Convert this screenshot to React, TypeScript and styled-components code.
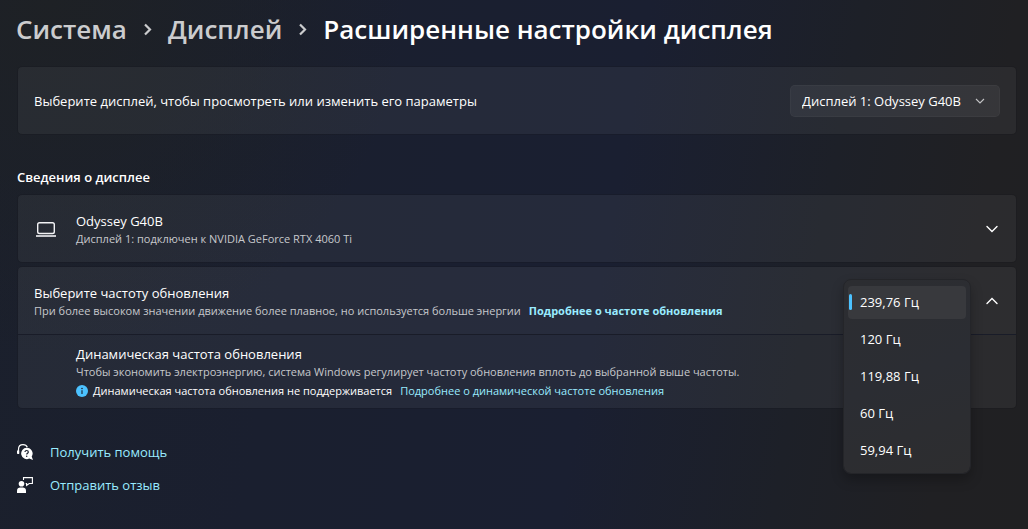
import React, { useState } from "react";
import styled, { createGlobalStyle } from "styled-components";

const GlobalStyle = createGlobalStyle`
  * { box-sizing: border-box; }
  html { min-height: 100%; background: #1b1f2d; }
  body {
    margin: 0;
    min-height: 100vh;
    color: #fff;
    font-family: "Open Sans", "Noto Sans", sans-serif;
    font-size: 13px;
    line-height: 20px;
    background:
      radial-gradient(circle at 5% 0, #1e2125 0%, rgba(30, 33, 37, 0) 32%),
      linear-gradient(100deg, #1b202c 0%, #1a1f2f 30%, #1a1f31 58%, #1d2028 77%, #202023 91%, #202022 100%);
  }
  button, select { font: inherit; color: inherit; }
`;

const Page = styled.main`
  padding: 7px 11px 16px 17px;
`;

const Breadcrumb = styled.ol`
  display: flex;
  align-items: center;
  margin: 0 0 15px -1px;
  padding: 0;
  list-style: none;
  font-size: 26px;
  font-weight: 600;
  line-height: 44px;
  white-space: nowrap;
`;

const Crumb = styled.li`
  display: flex;
  align-items: center;
`;

const CrumbLink = styled.a`
  color: #cbccce;
  text-decoration: none;
`;

const PageTitle = styled.h1`
  margin: 0;
  font: inherit;
`;

const CrumbSeparator = styled.svg`
  width: 12px;
  height: 14px;
  margin: 0 14px 0 15px;
  color: #cbccce;
`;

const Card = styled.section`
  border: 1px solid rgba(18, 20, 26, 0.25);
  border-radius: 5px;
  background: rgba(255, 255, 255, 0.05);
  background-clip: padding-box;
  & + & { margin-top: 3px; }
`;

const Row = styled.div<{ $raised?: boolean }>`
  display: flex;
  align-items: center;
  min-height: 67px;
  padding: 0 16px;
  background: ${(p) => (p.$raised ? "rgba(255, 255, 255, 0.012)" : "transparent")};
`;

const DetailRow = styled.div`
  border-top: 1px solid #191c28;
  padding: 9px 58px 8px;
`;

const RowText = styled.div`
  flex: 1;
  min-width: 0;
`;

const Label = styled.label`
  flex: 1;
`;

const RowTitle = styled.h3`
  margin: 0;
  font-size: 13px;
  font-weight: 400;
  line-height: 20px;
`;

const Caption = styled.p`
  margin: 0;
  font-size: 11px;
  line-height: 16px;
  color: #c6c8cc;
`;

const CaptionLink = styled.a<{ $strong?: boolean }>`
  margin-left: 8px;
  color: #99ebff;
  font-weight: ${(p) => (p.$strong ? 700 : 400)};
  text-decoration: none;
`;

const Notice = styled(Caption)`
  display: flex;
  align-items: center;
  margin-top: 2px;
  line-height: 18px;
  color: #fff;
`;

const InfoIcon = styled.svg`
  width: 12px;
  height: 12px;
  margin-right: 5px;
`;

const SectionTitle = styled.h2`
  margin: 32px 0 7px;
  font-size: 13px;
  font-weight: 600;
  line-height: 20px;
`;

const LeadIcon = styled.svg`
  width: 20px;
  height: 20px;
  margin: 0 20px 0 2px;
`;

const SelectBox = styled.div`
  display: grid;
  align-items: center;
  justify-items: end;
  width: 210px;
`;

const Select = styled.select`
  grid-area: 1 / 1;
  appearance: none;
  width: 100%;
  height: 32px;
  padding: 0 32px 0 11px;
  border: 1px solid rgba(255, 255, 255, 0.03);
  border-radius: 5px;
  background: rgba(255, 255, 255, 0.055);
`;

const SelectArrow = styled.svg`
  grid-area: 1 / 1;
  width: 10px;
  height: 10px;
  margin-right: 15px;
  color: #c4c4c6;
  pointer-events: none;
`;

const ExpandButton = styled.button`
  display: flex;
  align-items: center;
  justify-content: center;
  width: 32px;
  height: 32px;
  margin-right: -8px;
  padding: 0;
  border: 0;
  background: none;
`;

const MenuAnchor = styled.div`
  position: relative;
  width: 128px;
  height: 44px;
  margin-right: 5px;
`;

const Menu = styled.div`
  position: absolute;
  top: 0;
  left: 0;
  z-index: 1;
  display: flex;
  flex-direction: column;
  gap: 4px;
  width: 128px;
  padding: 6px 4px;
  border: 1px solid #242529;
  border-radius: 8px;
  background: linear-gradient(160deg, #2c2d31, #2b2d33 50%, #2d2d2f);
  background-clip: padding-box;
  box-shadow: 0 6px 12px rgba(0, 0, 0, 0.25);
`;

const Option = styled.button<{ $selected: boolean }>`
  display: flex;
  align-items: center;
  height: 33px;
  padding: 0 8px 0 1px;
  border: 0;
  border-radius: 4px;
  text-align: left;
  background: ${(p) => (p.$selected ? "#38393d" : "transparent")};
  &::before {
    content: "";
    width: 3px;
    height: 16px;
    margin-right: 8px;
    border-radius: 2px;
    background: ${(p) => (p.$selected ? "#4cc2ff" : "transparent")};
  }
`;

const HelpLinks = styled.nav`
  display: flex;
  flex-direction: column;
  align-items: flex-start;
  gap: 13px;
  margin-top: 33px;
`;

const HelpLink = styled.a`
  display: flex;
  align-items: center;
  gap: 17px;
  color: #99ebff;
  text-decoration: none;
`;

const HelpIcon = styled.svg`
  width: 16px;
  height: 16px;
  color: #fff;
`;

const rates = ["239,76 Гц", "120 Гц", "119,88 Гц", "60 Гц", "59,94 Гц"];

function Separator() {
  return (
    <CrumbSeparator viewBox="0 0 12 14" aria-hidden="true">
      <path d="M3 2.500l5 5-5 5" fill="none" stroke="currentColor" strokeWidth="2.200" />
    </CrumbSeparator>
  );
}

function Chevron({ up = false }: { up?: boolean }) {
  return (
    <svg width="12" height="12" viewBox="0 0 12 12" fill="none" stroke="#fff" strokeWidth="1.4" strokeLinecap="round" aria-hidden="true">
      <path d={up ? "M1 8.500l5-5 5 5" : "M1 3.500l5 5 5-5"} />
    </svg>
  );
}

export default function App() {
  const [rate, setRate] = useState(rates[0]);

  return (
    <>
      <GlobalStyle />
      <Page>
        <Breadcrumb>
          <Crumb><CrumbLink href="#system">Система</CrumbLink><Separator /></Crumb>
          <Crumb><CrumbLink href="#display">Дисплей</CrumbLink><Separator /></Crumb>
          <Crumb><PageTitle>Расширенные настройки дисплея</PageTitle></Crumb>
        </Breadcrumb>

        <Card>
          <Row>
            <Label htmlFor="display">Выберите дисплей, чтобы просмотреть или изменить его параметры</Label>
            <SelectBox>
              <Select id="display">
                <option>Дисплей 1: Odyssey G40B</option>
              </Select>
              <SelectArrow viewBox="0 0 10 10" aria-hidden="true">
                <path d="M1 3l4 4 4-4" fill="none" stroke="currentColor" strokeWidth="1.100" />
              </SelectArrow>
            </SelectBox>
          </Row>
        </Card>

        <SectionTitle>Сведения о дисплее</SectionTitle>

        <Card>
          <Row>
            <LeadIcon viewBox="0 0 20 20" fill="none" stroke="#f2f2f4" aria-hidden="true">
              <rect x="1.700" y="3.700" width="16.600" height="10.800" rx="1.800" strokeWidth="1.400" />
              <path d="M0 17h20" strokeWidth="1.600" />
            </LeadIcon>
            <RowText>
              <RowTitle>Odyssey G40B</RowTitle>
              <Caption>Дисплей 1: подключен к NVIDIA GeForce RTX 4060 Ti</Caption>
            </RowText>
            <ExpandButton type="button" aria-label="Развернуть" aria-expanded="false"><Chevron /></ExpandButton>
          </Row>
        </Card>

        <Card>
          <Row $raised>
            <RowText>
              <RowTitle>Выберите частоту обновления</RowTitle>
              <Caption>
                При более высоком значении движение более плавное, но используется больше энергии
                <CaptionLink $strong href="#refresh-rate">Подробнее о частоте обновления</CaptionLink>
              </Caption>
            </RowText>
            <MenuAnchor>
              <Menu role="listbox" aria-label="Частота обновления">
                {rates.map((value) => (
                  <Option
                    key={value}
                    type="button"
                    role="option"
                    aria-selected={value === rate}
                    $selected={value === rate}
                    onClick={() => setRate(value)}
                  >
                    {value}
                  </Option>
                ))}
              </Menu>
            </MenuAnchor>
            <ExpandButton type="button" aria-label="Свернуть" aria-expanded="true"><Chevron up /></ExpandButton>
          </Row>
          <DetailRow>
            <RowTitle>Динамическая частота обновления</RowTitle>
            <Caption>Чтобы экономить электроэнергию, система Windows регулирует частоту обновления вплоть до выбранной выше частоты.</Caption>
            <Notice>
              <InfoIcon viewBox="0 0 12 12" aria-hidden="true">
                <circle cx="6" cy="6" r="6" fill="#4cc2ff" />
                <circle cx="6" cy="3.500" r="0.800" fill="#1b1f2d" />
                <path d="M6 5.300v3.700" stroke="#1b1f2d" strokeWidth="1.100" />
              </InfoIcon>
              Динамическая частота обновления не поддерживается
              <CaptionLink href="#dynamic-rate">Подробнее о динамической частоте обновления</CaptionLink>
            </Notice>
          </DetailRow>
        </Card>

        <HelpLinks>
          <HelpLink href="#help">
            <HelpIcon viewBox="0 0 16 16" aria-hidden="true">
              <path d="M1.500 9V5.500C1.500 2.500 3.500 0.700 6 0.700c2 0 3.700 1 4.300 2.600" fill="none" stroke="currentColor" strokeWidth="1.200" />
              <path d="M0 6.500h2.200v3.500H1.200C.5 10 0 9.600 0 9z" fill="currentColor" />
              <path d="M9.700 3.700a5.700 5.700 0 1 0 2.500 10.900L16 16l-1.300-3.400A5.800 5.800 0 0 0 9.700 3.700z" fill="currentColor" />
              <path d="M8 8.100c0-2.200 3.300-2.100 3.300-.1 0 1.300-1.600 1.300-1.600 2.600" fill="none" stroke="#1b1f2d" strokeWidth="1.200" />
              <circle cx="9.700" cy="12.200" r="0.750" fill="#1b1f2d" />
            </HelpIcon>
            Получить помощь
          </HelpLink>
          <HelpLink href="#feedback">
            <HelpIcon viewBox="0 0 16 16" aria-hidden="true">
              <circle cx="4.500" cy="6.800" r="2.800" fill="currentColor" />
              <path d="M0 16v-2.500C0 11.500 1.500 10.400 3.200 10.400h2.600c1.700 0 3.200 1.100 3.200 3.100V16z" fill="currentColor" />
              <path d="M6.500 3V.6h8.900v5.900h-3.200L9.600 8.400V6.500H8.700" fill="none" stroke="currentColor" strokeWidth="1.100" />
            </HelpIcon>
            Отправить отзыв
          </HelpLink>
        </HelpLinks>
      </Page>
    </>
  );
}
